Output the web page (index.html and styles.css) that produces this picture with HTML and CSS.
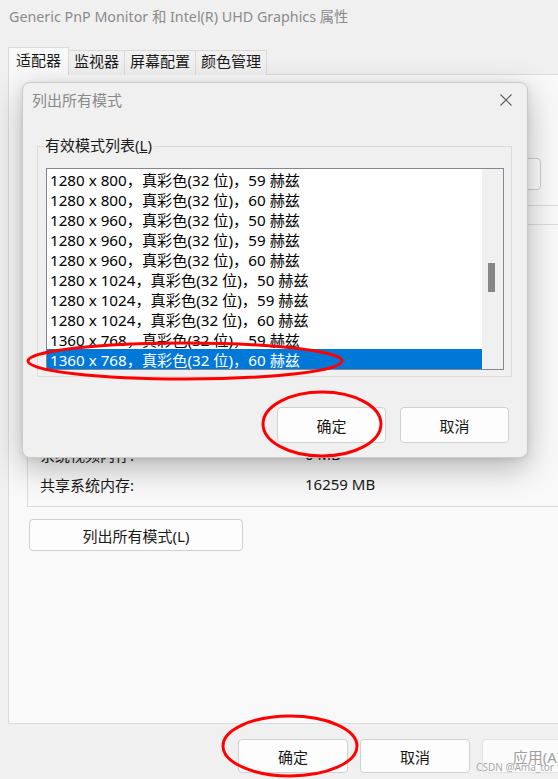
FILE: index.html
```html
<!DOCTYPE html>
<html lang="zh-CN">
<head>
<meta charset="utf-8">
<title>Generic PnP Monitor 和 Intel(R) UHD Graphics 属性</title>
<link rel="stylesheet" href="styles.css">
</head>
<body>
<div class="window">
  <div class="titlebar">Generic PnP Monitor 和 Intel(R) UHD Graphics 属性</div>
  <div class="tabs">
    <div class="tab active">适配器</div>
    <div class="tab">监视器</div>
    <div class="tab">屏幕配置</div>
    <div class="tab">颜色管理</div>
  </div>
  <div class="panel">
    <div class="adapter-row"><button class="btn prop-btn">属性(P)</button></div>
    <div class="sep"></div>
    <div class="info">
      <div class="info-row"><span class="k">芯片类型:</span><span>Intel(R) UHD Graphics Family</span></div>
      <div class="info-row"><span class="k">DAC 类型:</span><span>Internal</span></div>
      <div class="info-row"><span class="k">适配器字符串:</span><span>Intel(R) UHD Graphics</span></div>
      <div class="info-row"><span class="k">BIOS 信息:</span><span>Intel Video BIOS</span></div>
      <div class="info-row"><span class="k">总可用图形内存:</span><span>16387 MB</span></div>
      <div class="info-row"><span class="k">专用视频内存:</span><span>128 MB</span></div>
      <div class="info-row"><span class="k">系统视频内存:</span><span>0 MB</span></div>
      <div class="info-row"><span class="k">共享系统内存:</span><span>16259 MB</span></div>
    </div>
    <button class="btn list-btn">列出所有模式(L)</button>
  </div>
  <div class="footer">
    <button class="btn foot-btn">确定</button>
    <button class="btn foot-btn">取消</button>
    <button class="btn foot-btn disabled">应用(A)</button>
  </div>
</div>

<div class="dialog">
  <div class="dlg-head">
    <span class="dlg-title">列出所有模式</span>
    <svg class="close" width="12" height="12" viewBox="0 0 12 12"><path d="M0.5 0.5 L11.5 11.5 M11.5 0.5 L0.5 11.5" stroke="#5c5c5c" stroke-width="1.1" fill="none"/></svg>
  </div>
  <div class="group">
    <span class="legend">有效模式列表(<u>L</u>)</span>
    <div class="listbox">
      <div class="rows">
        <div class="row">1280 x 800，真彩色(32 位)，59 赫兹</div>
        <div class="row">1280 x 800，真彩色(32 位)，60 赫兹</div>
        <div class="row">1280 x 960，真彩色(32 位)，50 赫兹</div>
        <div class="row">1280 x 960，真彩色(32 位)，59 赫兹</div>
        <div class="row">1280 x 960，真彩色(32 位)，60 赫兹</div>
        <div class="row">1280 x 1024，真彩色(32 位)，50 赫兹</div>
        <div class="row">1280 x 1024，真彩色(32 位)，59 赫兹</div>
        <div class="row">1280 x 1024，真彩色(32 位)，60 赫兹</div>
        <div class="row">1360 x 768，真彩色(32 位)，59 赫兹</div>
        <div class="row selected">1360 x 768，真彩色(32 位)，60 赫兹</div>
      </div>
      <div class="scrollbar"><div class="thumb"></div></div>
    </div>
  </div>
  <div class="dlg-buttons">
    <button class="btn dlg-btn">确定</button>
    <button class="btn dlg-btn">取消</button>
  </div>
</div>

<svg class="marks" width="558" height="779" viewBox="0 0 558 779">
  <ellipse cx="185" cy="361" rx="157" ry="18" fill="none" stroke="#ff0000" stroke-width="3"/>
  <ellipse cx="322" cy="424" rx="59" ry="32" fill="none" stroke="#ff0000" stroke-width="3"/>
  <ellipse cx="290" cy="746" rx="67" ry="30" fill="none" stroke="#ff0000" stroke-width="3"/>
</svg>

<div class="watermark">CSDN @Ama_tor</div>
</body>
</html>
```

FILE: styles.css
```css
* { box-sizing: border-box; }

body {
  margin: 0;
  width: 558px;
  height: 779px;
  overflow: hidden;
  position: relative;
  background: #f0f0f0;
  font-family: "Noto Sans", "Noto Sans CJK SC", sans-serif;
  color: #1a1a1a;
  text-autospace: no-autospace;
}

.window { width: 640px; }

.titlebar {
  height: 36px;
  line-height: 34px;
  padding-left: 9px;
  font-size: 14.3px;
  color: #8b8b8b;
  white-space: nowrap;
}

.tabs {
  display: flex;
  align-items: flex-end;
  height: 28px;
  margin-top: 11px;
  margin-bottom: -1px;
  padding-left: 8px;
  position: relative;
  z-index: 1;
}

.tab {
  height: 25px;
  line-height: 21px;
  padding: 0 5px;
  font-size: 15px;
  background: #f0f0f0;
  border: 1px solid #dadada;
  border-bottom: none;
  margin-left: -1px;
  white-space: nowrap;
}

.tab.active {
  height: 28px;
  line-height: 24px;
  margin-left: 0;
  padding: 0 7px;
  background: #f9f9f9;
}

.panel {
  margin-left: 8px;
  width: 620px;
  height: 650px;
  border: 1px solid #dcdcdc;
  background: #f9f9f9;
  padding-left: 18px;
}

.btn {
  font-family: "Noto Sans", "Noto Sans CJK SC", sans-serif;
  font-size: 15px;
  color: #1a1a1a;
  background: #fdfdfd;
  border: 1px solid #d0d0d0;
  border-radius: 4px;
  padding: 0;
}

.adapter-row {
  width: 514px;
  display: flex;
  justify-content: flex-end;
  margin-top: 83px;
}

.prop-btn { width: 110px; height: 32px; }

.sep {
  height: 1px;
  background: #dcdcdc;
  margin-top: 15px;
}

.info {
  margin-top: 18px;
  width: 600px;
  border: 1px solid #dcdcdc;
  padding: 34px 0 7px 12px;
}

.info-row {
  display: flex;
  align-items: center;
  height: 30px;
  font-size: 15px;
  white-space: nowrap;
}

.info-row .k { width: 265px; }

.list-btn {
  display: block;
  margin: 12px 0 0 2px;
  width: 214px;
  height: 32px;
}

.footer {
  display: flex;
  gap: 12px;
  padding-left: 238px;
  margin-top: 15px;
}

.foot-btn { width: 110px; height: 34px; flex: none; }

.foot-btn.disabled {
  color: #a0a0a0;
  background: #fbfbfb;
  border-color: #e2e2e2;
}

/* dialog */
.dialog {
  position: absolute;
  left: 22px;
  top: 82px;
  width: 506px;
  height: 376px;
  border: 1px solid #cbcbcb;
  border-radius: 8px;
  background: #f0f0f0;
  box-shadow: 0 10px 32px rgba(0, 0, 0, 0.28), 0 2px 6px rgba(0, 0, 0, 0.08);
  display: flex;
  flex-direction: column;
  z-index: 2;
}

.dlg-head {
  height: 33px;
  display: flex;
  align-items: center;
  justify-content: space-between;
  padding: 0 15px 0 9px;
}

.dlg-title {
  font-size: 15px;
  color: #8a8a8a;
}

.group {
  position: relative;
  margin: 30px 15px 0 14px;
  border: 1px solid #dcdcdc;
  padding: 21px 7px 6px 8px;
}

.legend {
  position: absolute;
  top: -12px;
  left: 6px;
  padding: 0 1px;
  background: #f0f0f0;
  font-size: 15px;
  line-height: 20px;
  color: #1a1a1a;
}

.listbox {
  width: 458px;
  height: 202px;
  border: 1px solid #828790;
  background: #fff;
  display: flex;
}

.rows { width: 435px; }

.row {
  height: 20px;
  line-height: 22px;
  padding-left: 3px;
  font-size: 15.2px;
  white-space: nowrap;
  color: #000;
  overflow: hidden;
}

.row.selected {
  background: #0078d7;
  color: #fff;
}

.scrollbar {
  width: 21px;
  background: #f0f0f0;
}

.thumb {
  margin: 94px 0 0 6px;
  width: 7px;
  height: 29px;
  background: #868686;
}

.dlg-buttons {
  display: flex;
  justify-content: flex-end;
  gap: 14px;
  margin-top: 30px;
  padding-right: 18px;
}

.dlg-btn { width: 109px; height: 36px; }

.marks {
  position: absolute;
  left: 0;
  top: 0;
  z-index: 3;
  pointer-events: none;
}

.watermark {
  position: absolute;
  right: 4px;
  bottom: 5px;
  font-family: "Noto Sans", sans-serif;
  font-size: 10px;
  color: #a9a9a9;
  z-index: 4;
}
```
